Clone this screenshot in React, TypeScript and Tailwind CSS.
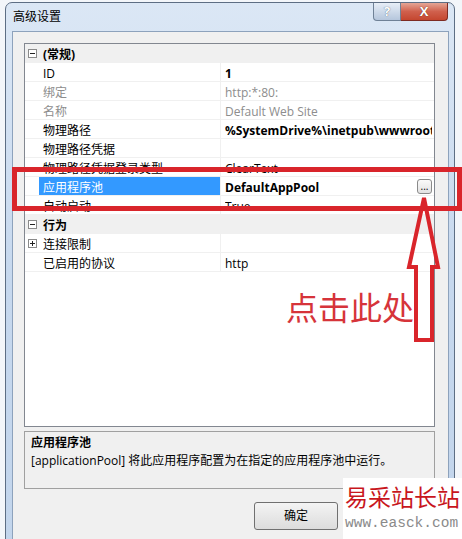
import React from "react";

const FONT = '"Open Sans", "Noto Sans CJK SC", sans-serif';

type Row =
  | { kind: "cat"; label: string; expanded: boolean }
  | {
      kind: "prop";
      name: string;
      value: string;
      gray?: boolean;
      bold?: boolean;
      selected?: boolean;
      expandable?: boolean;
      ellipsis?: boolean;
    };

const rows: Row[] = [
  { kind: "cat", label: "(常规)", expanded: true },
  { kind: "prop", name: "ID", value: "1", bold: true },
  { kind: "prop", name: "绑定", value: "http:*:80:", gray: true },
  { kind: "prop", name: "名称", value: "Default Web Site", gray: true },
  { kind: "prop", name: "物理路径", value: "%SystemDrive%\\inetpub\\wwwroot", bold: true },
  { kind: "prop", name: "物理路径凭据", value: "" },
  { kind: "prop", name: "物理路径凭据登录类型", value: "ClearText" },
  { kind: "prop", name: "应用程序池", value: "DefaultAppPool", bold: true, selected: true, ellipsis: true },
  { kind: "prop", name: "自动启动", value: "True" },
  { kind: "cat", label: "行为", expanded: true },
  { kind: "prop", name: "连接限制", value: "", expandable: true },
  { kind: "prop", name: "已启用的协议", value: "http" },
];

function Box({ plus }: { plus: boolean }) {
  return (
    <span className="relative block w-[9px] h-[9px] border border-[#8a8a8a] bg-white">
      <span className="absolute left-[1px] top-[3px] w-[5px] h-[1px] bg-[#222]" />
      {plus && <span className="absolute left-[3px] top-[1px] w-[1px] h-[5px] bg-[#222]" />}
    </span>
  );
}

function GridRow({ row }: { row: Row }) {
  if (row.kind === "cat") {
    return (
      <div className="flex items-center h-[19px] bg-[#f0f0f0] border-b border-[#f0f0f0]">
        <div className="w-[14px] flex items-center pl-[3px] pt-[1px]">
          <Box plus={!row.expanded} />
        </div>
        <div className="pl-[4px] pt-[3px] text-[12px] font-bold text-black leading-[16px]">{row.label}</div>
      </div>
    );
  }
  return (
    <div className="flex h-[19px] border-b border-[#f0f0f0]">
      <div className="w-[14px] flex items-center pl-[3px] pt-[1px]">
        {row.expandable && <Box plus />}
      </div>
      <div
        className={
          "w-[182px] border-r border-[#f0f0f0] pl-[4px] pt-[3px] text-[12px] leading-[15px] whitespace-nowrap overflow-hidden " +
          (row.selected ? "bg-[#3399ff] text-white" : row.gray ? "text-[#8d8d8d]" : "text-black")
        }
      >
        {row.name}
      </div>
      <div className="flex-1 flex items-center pl-[4px] pr-[2px] overflow-hidden">
        <div
          className={
            "flex-1 pt-[3px] text-[12px] leading-[15px] whitespace-nowrap overflow-hidden " +
            (row.gray ? "text-[#8d8d8d]" : "text-black") +
            (row.bold ? " font-bold" : "")
          }
        >
          {row.value}
        </div>
        {row.ellipsis && (
          <div className="w-[15px] h-[15px] rounded-[3px] border border-[#8a8a8a] bg-gradient-to-b from-[#fafafa] to-[#e2e2e2] flex items-end justify-center text-[10px] leading-[10px] pb-[2px] text-black">
            ...
          </div>
        )}
      </div>
    </div>
  );
}

export default function App() {
  return (
    <div
      className="relative w-[462px] h-[539px] overflow-hidden bg-[#f3f6fa]"
      style={{ fontFamily: FONT }}
    >
      {/* window */}
      <div className="ml-[5px] mt-[2px] w-[450px] h-[560px] rounded-t-[7px] border border-[#5d6e84] bg-gradient-to-b from-[#dbe7f5] via-[#c6d8ee] to-[#c2d5ec] flex flex-col pl-[6px] pr-[5px]">
        {/* title bar */}
        <div className="h-[28px] flex items-start">
          <div className="pt-[6px] pl-[1px] text-[12px] leading-[16px] text-black flex-1">高级设置</div>
          <div className="flex mr-[1px]">
            <div className="w-[28px] h-[18px] rounded-bl-[4px] border border-[#6f8196] border-t-0 bg-gradient-to-b from-[#e7eef7] to-[#b5c6dc] flex items-center justify-center text-[13px] font-bold text-white [text-shadow:0_0_1px_#33475e]">
              ?
            </div>
            <div className="w-[47px] h-[18px] rounded-br-[4px] border border-[#7d2b22] border-t-0 border-l-0 bg-gradient-to-b from-[#e3a595] via-[#d0604d] to-[#c4462f] flex items-center justify-center text-[13px] font-bold text-white [text-shadow:0_0_1px_#4a1008]">
              X
            </div>
          </div>
        </div>

        {/* client area */}
        <div className="flex-1 border border-[#8da2bc] bg-[#f0f0f0] flex flex-col px-[11px] pt-[11px]">
          <div className="w-[411px] h-[384px] border border-[#828790] bg-white flex flex-col">
            {rows.map((r, i) => (
              <GridRow key={i} row={r} />
            ))}
          </div>

          <div className="mt-[4px] w-[411px] h-[58px] border border-[#a0a0a0] bg-[#f0f0f0] px-[6px] pt-[3px]">
            <div className="text-[12px] leading-[16px] font-bold text-black">应用程序池</div>
            <div className="mt-[2px] text-[12px] leading-[16px] text-black whitespace-nowrap">
              [applicationPool] 将此应用程序配置为在指定的应用程序池中运行。
            </div>
          </div>

          <div className="mt-[13px] flex justify-end gap-[7px] pr-[8px]">
            <div className="w-[84px] h-[28px] rounded-[3px] border border-[#707070] bg-gradient-to-b from-[#f4f4f4] to-[#dcdcdc] flex items-center justify-center text-[12px] text-black">
              确定
            </div>
            <div className="w-[84px] h-[28px] rounded-[3px] border border-[#707070] bg-gradient-to-b from-[#f4f4f4] to-[#dcdcdc]" />
          </div>
        </div>
      </div>

      {/* red annotation rectangle */}
      <div className="absolute left-[12px] top-[167px] w-[450px] h-[44px] border-[5px] border-[#d9252b]" />

      {/* arrow */}
      <svg className="absolute left-0 top-0" width="462" height="539" viewBox="0 0 462 539">
        <polygon
          points="424,198 438,267 432,267 432,340 416,340 416,267 409,267"
          fill="none"
          stroke="#d9252b"
          strokeWidth="4"
          strokeLinejoin="miter"
        />
      </svg>

      {/* annotation text */}
      <div
        className="absolute left-[286px] top-[290px] text-[32px] leading-[32px] text-[#d6343a] whitespace-nowrap"
        style={{ fontFamily: '"Noto Sans CJK SC", sans-serif' }}
      >
        点击此处
      </div>

      {/* watermark */}
      <div className="absolute left-[343px] top-[478px] w-[119px] h-[61px] bg-white flex flex-col items-start pl-[2px]">
        <div
          className="mt-[4px] text-[23px] leading-[28px] text-[#c8161d] whitespace-nowrap"
          style={{ fontFamily: '"Noto Sans CJK SC", serif' }}
        >
          易采站长站
        </div>
        <div
          className="mt-[5px] text-[14.5px] leading-[16px] text-[#8a8a8a] whitespace-nowrap"
          style={{ fontFamily: '"Liberation Mono", monospace' }}
        >
          www.easck.com
        </div>
      </div>
    </div>
  );
}
